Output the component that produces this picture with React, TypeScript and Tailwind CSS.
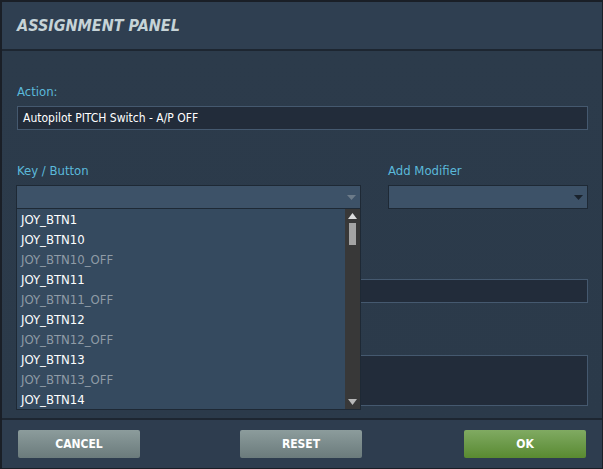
import React from "react";

const items: { label: string; off?: boolean }[] = [
  { label: "JOY_BTN1" },
  { label: "JOY_BTN10" },
  { label: "JOY_BTN10_OFF", off: true },
  { label: "JOY_BTN11" },
  { label: "JOY_BTN11_OFF", off: true },
  { label: "JOY_BTN12" },
  { label: "JOY_BTN12_OFF", off: true },
  { label: "JOY_BTN13" },
  { label: "JOY_BTN13_OFF", off: true },
  { label: "JOY_BTN14" },
];

const font = { fontFamily: '"DejaVu Sans Condensed", "DejaVu Sans", "Noto Sans", sans-serif' };

export default function App() {
  return (
    <div
      className="w-[603px] h-[469px] bg-[#1a1f27] pt-[2px] pl-[2px] pr-[1px] pb-[1px] overflow-hidden"
      style={font}
    >
      <div className="relative flex h-full flex-col bg-[#2b3a4a]">
        {/* Header */}
        <div className="flex h-[49px] items-center bg-[#2f3f51] pl-[15px] border-b-[2px] border-[#1d2631]">
          <span className="text-[16px] font-bold italic text-[#c6d3d7]">
            ASSIGNMENT PANEL
          </span>
        </div>

        {/* Body */}
        <div className="relative flex-1 bg-gradient-to-b from-[#2c3b4b] to-[#2b3a4a] pl-[15px] pr-[14px] pt-[33px]">
          <div className="text-[13px] leading-[16px] text-[#5bb9da]">Action:</div>
          <div className="mt-[6px] flex h-[24px] items-center border border-[#45596f] bg-[#222c3a] px-[5px] text-[12px] text-white">
            Autopilot PITCH Switch - A/P OFF
          </div>

          <div className="mt-[33px] flex gap-[28px]">
            <div className="-ml-[1px] flex w-[345px] flex-col">
              <div className="pl-[1px] text-[13px] leading-[16px] text-[#5bb9da]">Key / Button</div>
              <div className="mt-[6px] flex h-[24px] items-center justify-end border border-[#1e2935] bg-[#3d5268] pr-[4px]">
                <svg width="9" height="5" viewBox="0 0 9 5">
                  <polygon points="0,0 9,0 4.5,5" fill="#6c7b89" />
                </svg>
              </div>
            </div>
            <div className="-ml-[1px] flex w-[200px] flex-col">
              <div className="text-[13px] leading-[16px] text-[#5bb9da]">Add Modifier</div>
              <div className="mt-[6px] flex h-[24px] items-center justify-end border border-[#1e2935] bg-[#3d5268] pr-[4px]">
                <svg width="9" height="5" viewBox="0 0 9 5">
                  <polygon points="0,0 9,0 4.5,5" fill="#1a232d" />
                </svg>
              </div>
            </div>
          </div>

          <div className="mt-[70px] h-[24px] border border-[#45596f] bg-[#222c3a]" />

          <div className="mt-[52px] h-[51px] border border-[#45596f] bg-[#222c3a]" />

          {/* Dropdown list overlay */}
          <div className="absolute left-[14px] top-[157px] flex h-[202px] w-[345px] border border-[#1e2935] bg-[#354a5f]">
            <div className="flex flex-1 flex-col pl-[4px] pt-[1px]">
              {items.map((it) => (
                <div
                  key={it.label}
                  className={`h-[20px] text-[13px] leading-[20px] ${it.off ? "text-[#8f9ba6]" : "text-white"}`}
                >
                  {it.label}
                </div>
              ))}
            </div>
            <div className="flex w-[15px] flex-col items-center bg-[#383838] pt-[4px] pb-[4px]">
              <svg width="9" height="6" viewBox="0 0 9 6">
                <polygon points="4.5,0 9,6 0,6" fill="#dcdcdc" />
              </svg>
              <div className="mt-[4px] h-[22px] w-[7px] bg-[#a3a3a3]" />
              <div className="flex-1" />
              <svg width="9" height="6" viewBox="0 0 9 6">
                <polygon points="0,0 9,0 4.5,6" fill="#b8b8b8" />
              </svg>
            </div>
          </div>
        </div>

        {/* Footer */}
        <div className="flex h-[50px] items-center justify-between border-t-[2px] border-[#1d2631] bg-[#2e3d4f] pl-[16px] pr-[16px]">
          <button className="h-[28px] w-[122px] rounded-[2px] bg-gradient-to-b from-[#8c9c9c] to-[#6b7b7c] text-[12px] font-bold text-white">
            CANCEL
          </button>
          <button className="-ml-[2px] h-[28px] w-[122px] rounded-[2px] bg-gradient-to-b from-[#8c9c9c] to-[#6b7b7c] text-[12px] font-bold text-white">
            RESET
          </button>
          <button className="h-[28px] w-[122px] rounded-[2px] bg-gradient-to-b from-[#80aa62] to-[#598a30] text-[12px] font-bold text-white">
            OK
          </button>
        </div>
      </div>
    </div>
  );
}
